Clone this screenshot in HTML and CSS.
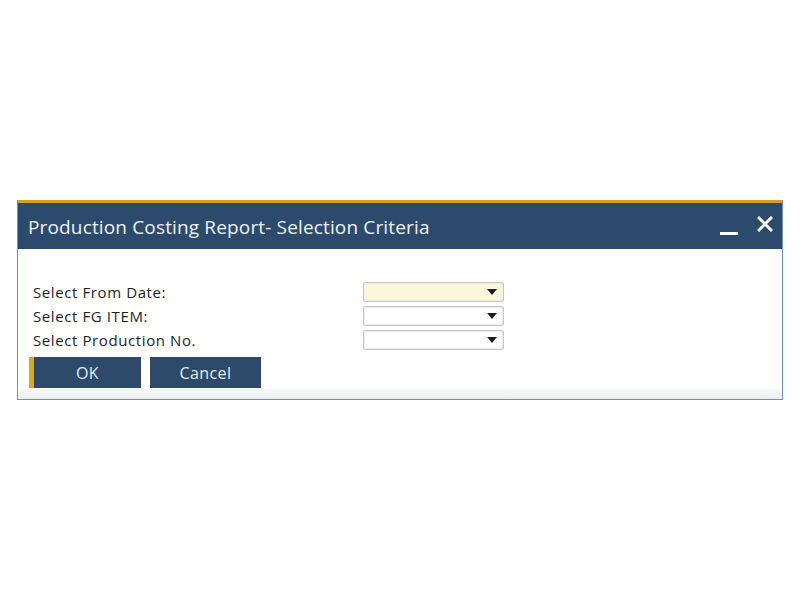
FILE: index.html
```html
<!DOCTYPE html>
<html>
<head>
<meta charset="utf-8">
<link rel="stylesheet" href="styles.css">
</head>
<body>
<div class="page">
  <div class="dialog">
    <div class="titlebar">
      <div class="title">Production Costing Report- Selection Criteria</div>
      <div class="controls">
        <span class="min"></span>
        <svg class="close" width="16" height="16" viewBox="0 0 16 16"><path d="M2 2 L14 14 M14 2 L2 14" stroke="#ffffff" stroke-width="3" stroke-linecap="square"/></svg>
      </div>
    </div>
    <div class="body">
      <div class="form">
        <div class="row">
          <div class="label">Select From Date:</div>
          <div class="select active"><span class="arrow"></span></div>
        </div>
        <div class="row">
          <div class="label">Select FG ITEM:</div>
          <div class="select"><span class="arrow"></span></div>
        </div>
        <div class="row">
          <div class="label">Select Production No.</div>
          <div class="select"><span class="arrow"></span></div>
        </div>
      </div>
      <div class="buttons">
        <div class="btn primary">OK</div>
        <div class="btn">Cancel</div>
      </div>
    </div>
    <div class="footer"></div>
  </div>
</div>
</body>
</html>
```
FILE: styles.css
```css
html, body {
  margin: 0;
  padding: 0;
  background: #ffffff;
}
.page {
  width: 800px;
  height: 600px;
  padding-top: 200px;
  padding-left: 17px;
  box-sizing: border-box;
}
.dialog {
  width: 766px;
  box-sizing: border-box;
  border: 1px solid #6d8fd0;
  border-top: none;
  background: #ffffff;
}
.titlebar {
  height: 46px;
  border-top: 3px solid #d6a020;
  background: #2c4a6b;
  display: flex;
  align-items: center;
  justify-content: space-between;
  padding: 0 9px 0 10px;
  box-sizing: content-box;
}
.title {
  font-family: "Open Sans", "Noto Sans", sans-serif;
  font-size: 19px;
  color: #eef2f6;
  letter-spacing: 0.15px;
  padding-top: 1px;
}
.controls {
  display: flex;
  align-items: center;
  gap: 19px;
}
.min {
  display: block;
  width: 18px;
  height: 3px;
  background: #ffffff;
  margin-top: 14px;
}
.close {
  display: block;
  margin-top: -4px;
}
.body {
  padding: 33px 0 0 15px;
}
.form {
  display: flex;
  flex-direction: column;
  gap: 4px;
}
.row {
  display: flex;
  align-items: center;
  height: 20px;
}
.label {
  width: 330px;
  font-family: "Open Sans", "Noto Sans", sans-serif;
  font-size: 15px;
  letter-spacing: 0.6px;
  color: #1e1e1e;
}
.select {
  width: 141px;
  height: 20px;
  box-sizing: border-box;
  border: 1px solid #c9c9c9;
  border-radius: 2px;
  background: #ffffff;
  position: relative;
  box-shadow: inset 0 0 0 1px #ececec;
}
.select.active {
  background: #fdf5dc;
}
.arrow {
  position: absolute;
  right: 6px;
  top: 6px;
  width: 0;
  height: 0;
  border-left: 5px solid transparent;
  border-right: 5px solid transparent;
  border-top: 6px solid #1c1c1c;
}
.buttons {
  display: flex;
  gap: 9px;
  margin-top: 7px;
  margin-left: -4px;
}
.btn {
  width: 111px;
  height: 31px;
  box-sizing: border-box;
  background: #2e4a6a;
  color: #e6ecf2;
  font-family: "Open Sans", "Noto Sans", sans-serif;
  font-size: 16px;
  letter-spacing: 0.4px;
  display: flex;
  align-items: center;
  justify-content: center;
}
.btn.primary {
  border-left: 5px solid #e0a814;
  width: 112px;
}
.footer {
  height: 10px;
  margin-top: 1px;
  background: linear-gradient(#f7f8f8, #eef0f0);
}
```
